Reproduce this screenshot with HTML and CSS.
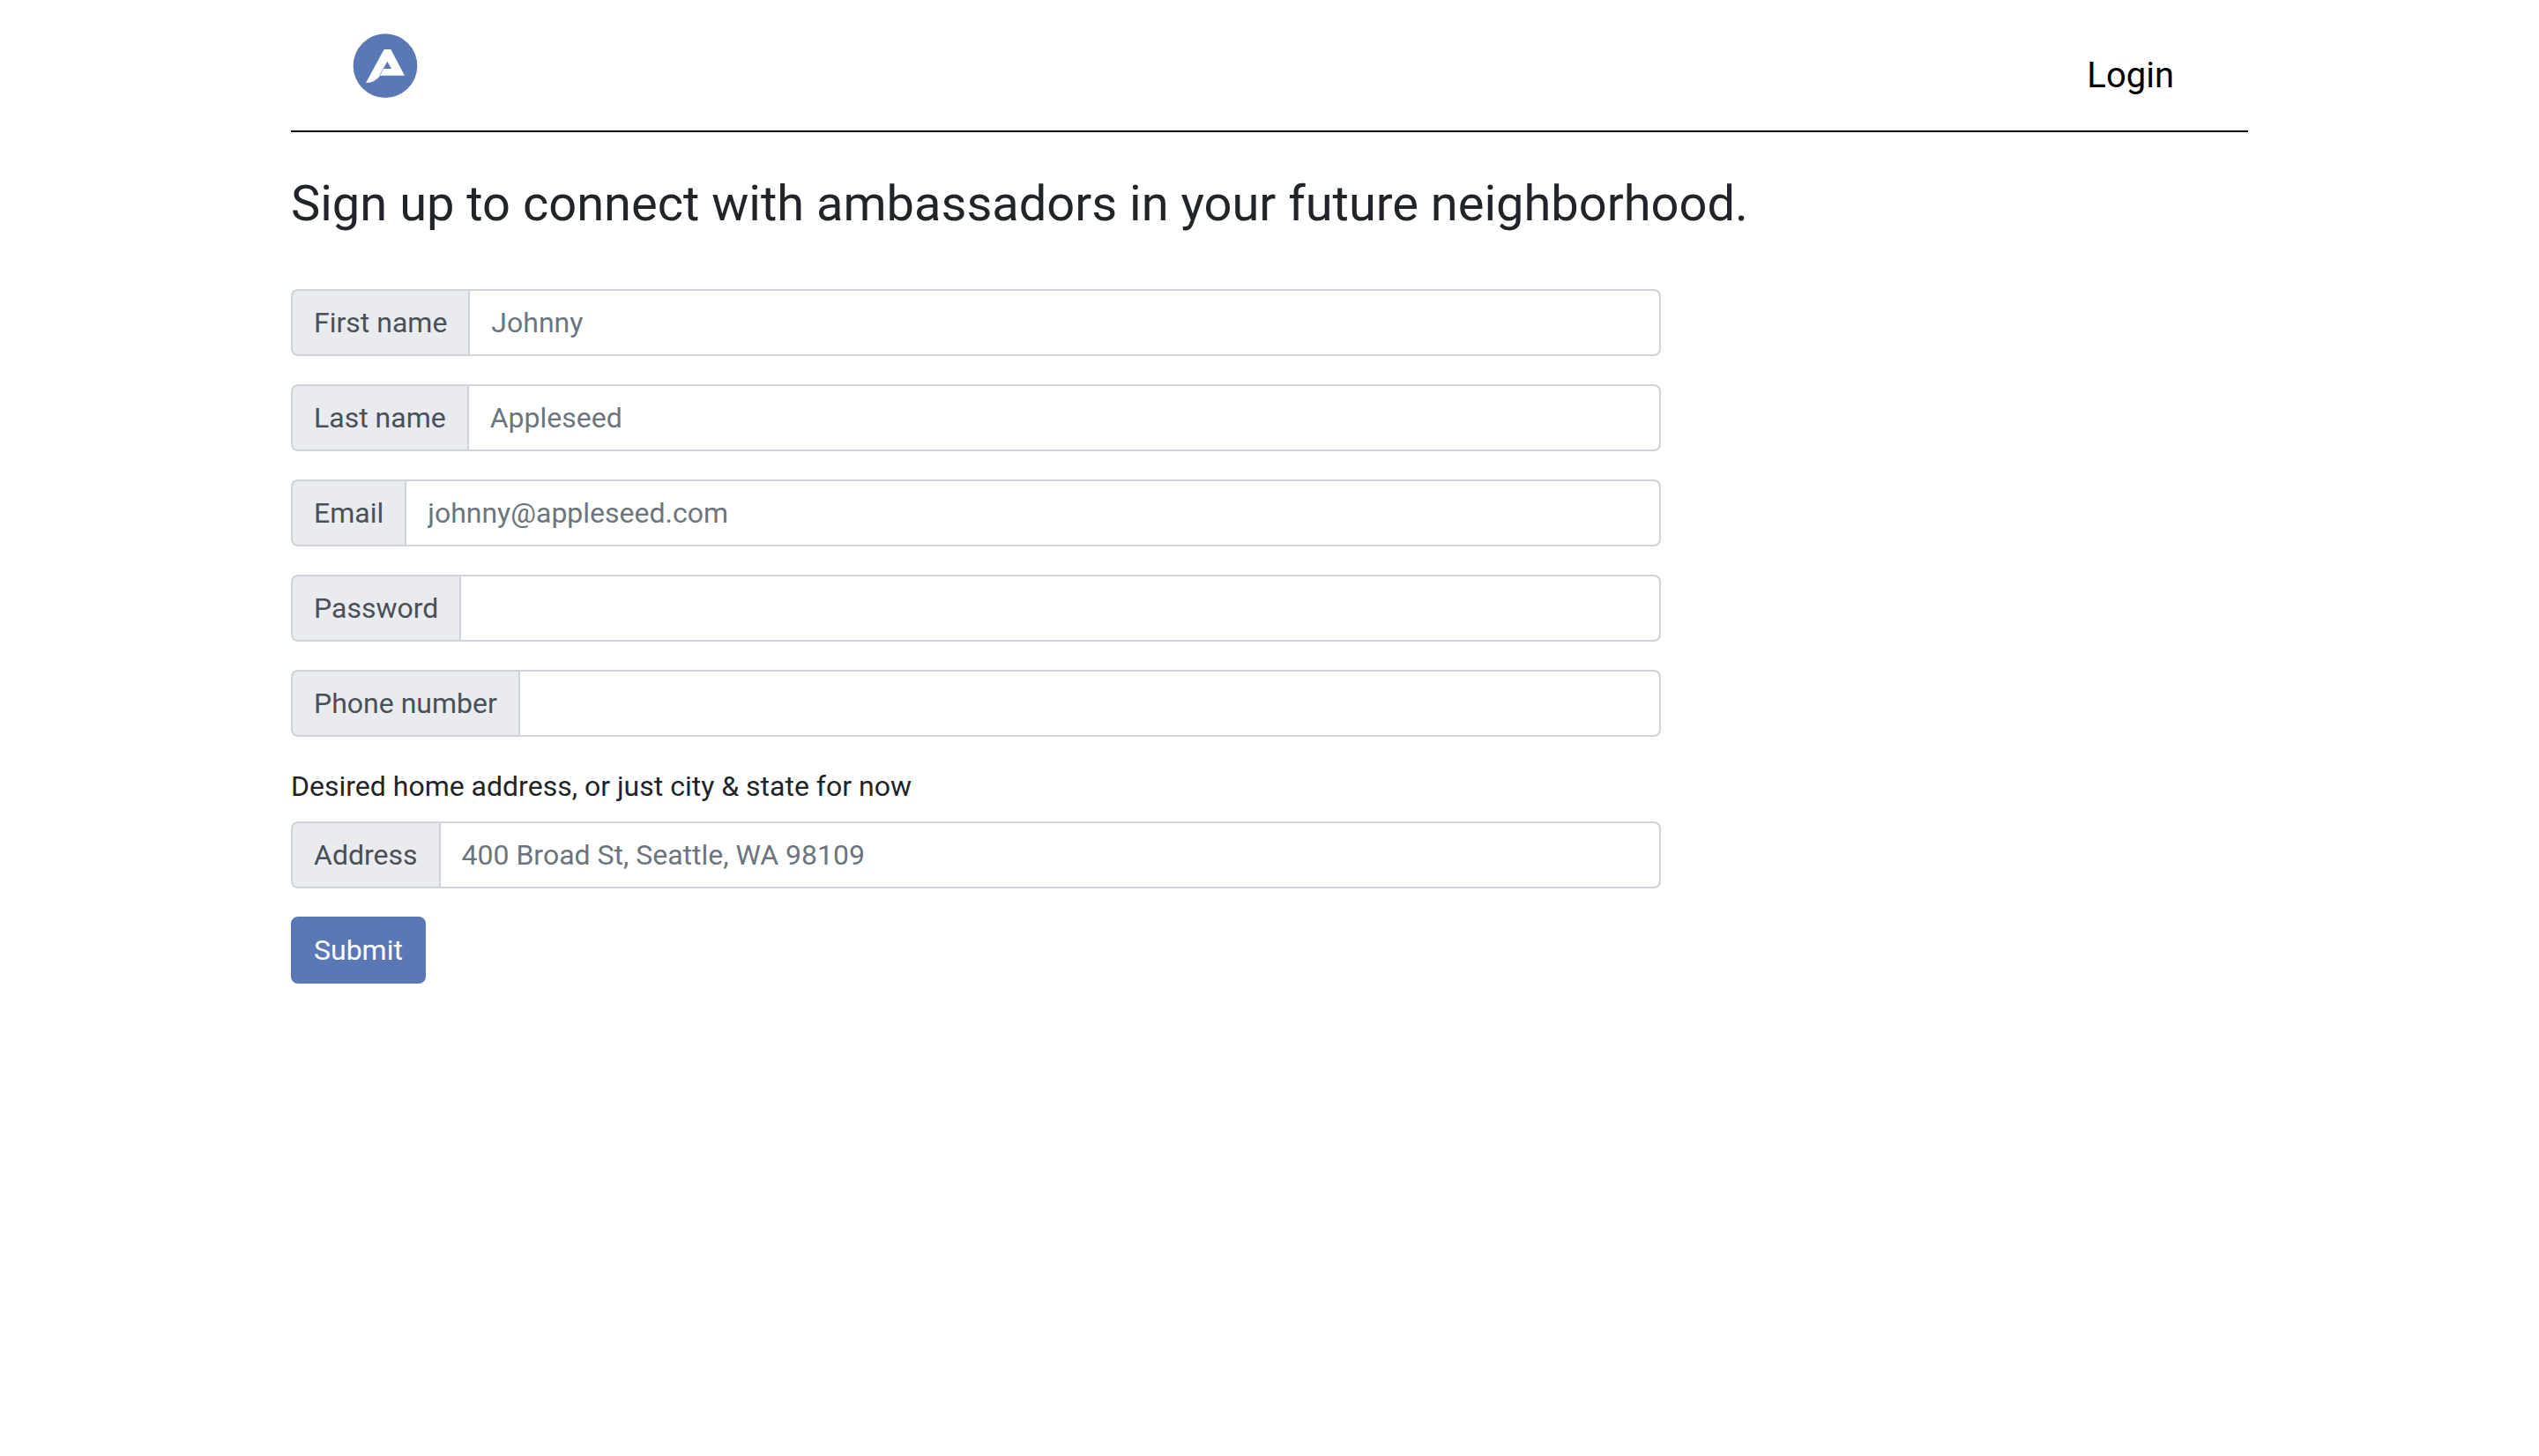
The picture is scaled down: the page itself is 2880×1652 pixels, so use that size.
FILE: index.html
```
<!DOCTYPE html>
<html lang="en">
<head>
<meta charset="utf-8">
<meta name="viewport" content="width=device-width, initial-scale=1">
<title>Sign up</title>
<link rel="stylesheet" href="styles.css">
</head>
<body>
<div class="container">
  <header class="navbar">
    <a class="brand" href="#" aria-label="Home">
      <svg class="logo" viewBox="0 0 222 222" aria-hidden="true">
        <circle cx="111" cy="110" r="109" fill="#5b78b6"/>
        <path fill="#fff" fill-rule="evenodd" d="M107 54H130L177 143H94Q75 168 45 168ZM118 95L104 120H132Z"/>
        <path fill="none" stroke="#5b78b6" stroke-width="2" d="M105 119L92 143"/>
      </svg>
    </a>
    <a class="nav-link" href="#">Login</a>
  </header>
  <main>
    <h1 class="title">Sign up to connect with ambassadors in your future neighborhood.</h1>
    <form class="signup">
      <div class="input-group">
        <label class="input-label" for="first-name">First name</label>
        <input class="input" id="first-name" type="text" placeholder="Johnny">
      </div>
      <div class="input-group">
        <label class="input-label" for="last-name">Last name</label>
        <input class="input" id="last-name" type="text" placeholder="Appleseed">
      </div>
      <div class="input-group">
        <label class="input-label" for="email">Email</label>
        <input class="input" id="email" type="email" placeholder="johnny@appleseed.com">
      </div>
      <div class="input-group">
        <label class="input-label" for="password">Password</label>
        <input class="input" id="password" type="password">
      </div>
      <div class="input-group">
        <label class="input-label" for="phone">Phone number</label>
        <input class="input" id="phone" type="tel">
      </div>
      <div class="address">
        <p class="hint" id="address-hint">Desired home address, or just city &amp; state for now</p>
        <div class="input-group">
          <label class="input-label" for="address">Address</label>
          <input class="input" id="address" type="text" placeholder="400 Broad St, Seattle, WA 98109" aria-describedby="address-hint">
        </div>
      </div>
      <button class="submit" type="submit">Submit</button>
    </form>
  </main>
</div>
</body>
</html>
```
FILE: styles.css
```
* {
  box-sizing: border-box;
}

body {
  margin: 0;
  background: #fff;
  color: #212529;
  font-family: Roboto, sans-serif;
  font-size: 32px;
  line-height: 48px;
}

.container {
  max-width: 2280px;
  margin: 0 auto;
  padding: 0 30px;
}

.navbar {
  display: flex;
  justify-content: space-between;
  align-items: flex-start;
  padding: 38px 84px 36px 70px;
  border-bottom: 2px solid #000;
}

.logo {
  display: block;
  width: 74px;
  height: 74px;
}

.nav-link {
  padding-top: 24px;
  color: #000;
  font-size: 40px;
  text-decoration: none;
}

.title {
  margin: 48px 0 64px;
  font-size: 56px;
  font-weight: 400;
  line-height: 66px;
}

.signup {
  display: flex;
  flex-direction: column;
  align-items: flex-start;
  gap: 32px;
  width: 70%;
}

.input-group {
  display: flex;
  width: 100%;
}

.input-label {
  padding: 12px 24px;
  border: 2px solid #ced4da;
  border-right: 0;
  border-radius: 8px 0 0 8px;
  background: #eaebef;
  color: #495057;
  white-space: nowrap;
}

.input {
  flex: 1;
  min-width: 0;
  height: 76px;
  padding: 12px 24px;
  border: 2px solid #ced4da;
  border-radius: 0 8px 8px 0;
  background: #fff;
  color: #495057;
  font: inherit;
}

.input::placeholder {
  color: #6c757d;
  opacity: 1;
}

.address {
  width: 100%;
}

.hint {
  margin: 0 0 16px;
}

.submit {
  padding: 12px 24px;
  border: 2px solid #5b78b6;
  border-radius: 8px;
  background: #5b78b6;
  color: #fff;
  font: inherit;
}
```
